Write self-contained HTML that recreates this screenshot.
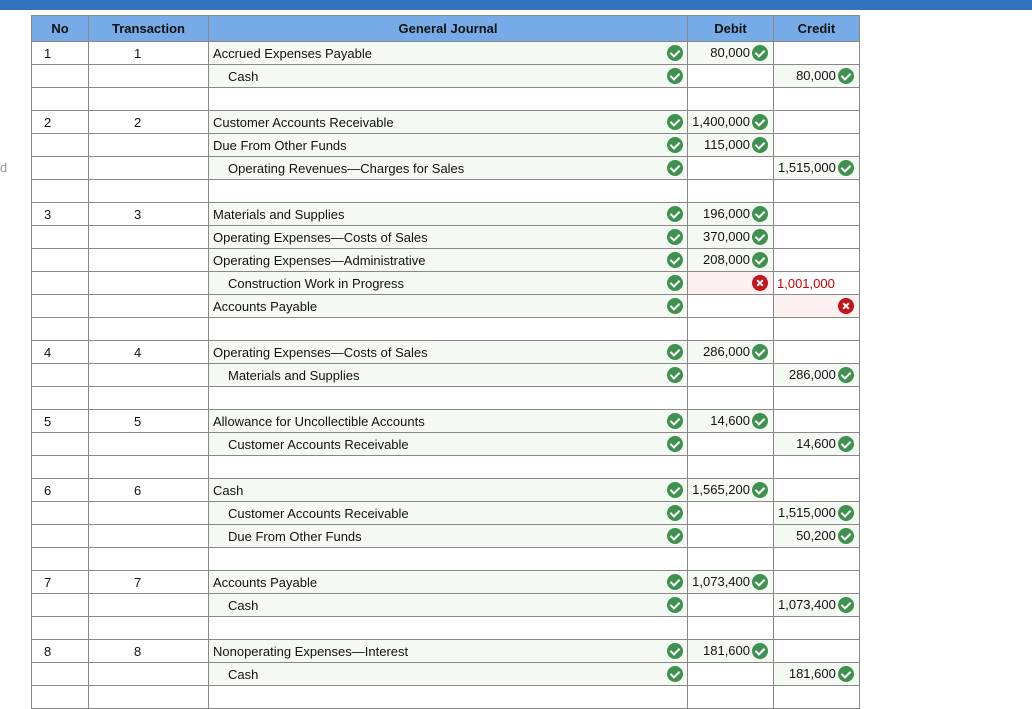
<!DOCTYPE html>
<html><head><meta charset="utf-8"><style>
body{margin:0;background:#fff;font-family:"Liberation Sans",Arial,sans-serif;font-size:13px;color:#111;width:1032px;height:689px;overflow:hidden;position:relative}
.bar{position:absolute;left:0;top:0;width:1032px;height:10px;background:#3173bd}
.d{position:absolute;left:0;top:160px;color:#999;font-size:13px}
table{position:absolute;left:31px;top:15px;border-collapse:collapse;table-layout:fixed}
td,th{border:1px solid #888;height:22px;padding:0 4px;white-space:nowrap;overflow:hidden}
th{background:#76abe8;font-weight:bold;height:25px;font-size:13px}
td.c{text-align:left;padding-left:45px}
td.n{padding-left:12px}
td.j{background:#f4faf3;position:relative}
td.j.i{padding-left:19px}
td.v{text-align:right;background:#f4faf3;padding-right:5px}
td.e{background:#fdf0f1;text-align:right;padding-right:5px}
td.r{color:#c00;text-align:left;padding-left:3px}
.ok,.x{display:inline-block;width:16px;height:16px;border-radius:50%;vertical-align:middle;margin-left:2px;position:relative;top:0}
.ok{background:#3f9150}
.x{background:#c4131b}
.ok::after{content:"";position:absolute;left:5px;top:3px;width:4px;height:7px;border:solid #fff;border-width:0 2px 2px 0;transform:rotate(45deg)}
.x::before,.x::after{content:"";position:absolute;left:7px;top:4px;width:2px;height:8px;background:#fff;transform:rotate(45deg)}
.x::after{transform:rotate(-45deg)}
td.j .ok{position:absolute;right:4px;top:3px}
</style></head><body>
<div class="bar"></div><div class="d">d</div>
<table>
<colgroup><col style="width:57px"><col style="width:120px"><col style="width:479px"><col style="width:86px"><col style="width:85px"></colgroup>
<tr><th>No</th><th>Transaction</th><th>General Journal</th><th>Debit</th><th>Credit</th></tr>
<tr><td class="n">1</td><td class="c">1</td><td class="j">Accrued Expenses Payable<span class="ok"></span></td><td class="v">80,000<span class="ok"></span></td><td></td></tr>
<tr><td></td><td></td><td class="j i">Cash<span class="ok"></span></td><td></td><td class="v">80,000<span class="ok"></span></td></tr>
<tr><td></td><td></td><td></td><td></td><td></td></tr>
<tr><td class="n">2</td><td class="c">2</td><td class="j">Customer Accounts Receivable<span class="ok"></span></td><td class="v">1,400,000<span class="ok"></span></td><td></td></tr>
<tr><td></td><td></td><td class="j">Due From Other Funds<span class="ok"></span></td><td class="v">115,000<span class="ok"></span></td><td></td></tr>
<tr><td></td><td></td><td class="j i">Operating Revenues—Charges for Sales<span class="ok"></span></td><td></td><td class="v">1,515,000<span class="ok"></span></td></tr>
<tr><td></td><td></td><td></td><td></td><td></td></tr>
<tr><td class="n">3</td><td class="c">3</td><td class="j">Materials and Supplies<span class="ok"></span></td><td class="v">196,000<span class="ok"></span></td><td></td></tr>
<tr><td></td><td></td><td class="j">Operating Expenses—Costs of Sales<span class="ok"></span></td><td class="v">370,000<span class="ok"></span></td><td></td></tr>
<tr><td></td><td></td><td class="j">Operating Expenses—Administrative<span class="ok"></span></td><td class="v">208,000<span class="ok"></span></td><td></td></tr>
<tr><td></td><td></td><td class="j i">Construction Work in Progress<span class="ok"></span></td><td class="e"><span class="x"></span></td><td class="r">1,001,000</td></tr>
<tr><td></td><td></td><td class="j">Accounts Payable<span class="ok"></span></td><td></td><td class="e"><span class="x"></span></td></tr>
<tr><td></td><td></td><td></td><td></td><td></td></tr>
<tr><td class="n">4</td><td class="c">4</td><td class="j">Operating Expenses—Costs of Sales<span class="ok"></span></td><td class="v">286,000<span class="ok"></span></td><td></td></tr>
<tr><td></td><td></td><td class="j i">Materials and Supplies<span class="ok"></span></td><td></td><td class="v">286,000<span class="ok"></span></td></tr>
<tr><td></td><td></td><td></td><td></td><td></td></tr>
<tr><td class="n">5</td><td class="c">5</td><td class="j">Allowance for Uncollectible Accounts<span class="ok"></span></td><td class="v">14,600<span class="ok"></span></td><td></td></tr>
<tr><td></td><td></td><td class="j i">Customer Accounts Receivable<span class="ok"></span></td><td></td><td class="v">14,600<span class="ok"></span></td></tr>
<tr><td></td><td></td><td></td><td></td><td></td></tr>
<tr><td class="n">6</td><td class="c">6</td><td class="j">Cash<span class="ok"></span></td><td class="v">1,565,200<span class="ok"></span></td><td></td></tr>
<tr><td></td><td></td><td class="j i">Customer Accounts Receivable<span class="ok"></span></td><td></td><td class="v">1,515,000<span class="ok"></span></td></tr>
<tr><td></td><td></td><td class="j i">Due From Other Funds<span class="ok"></span></td><td></td><td class="v">50,200<span class="ok"></span></td></tr>
<tr><td></td><td></td><td></td><td></td><td></td></tr>
<tr><td class="n">7</td><td class="c">7</td><td class="j">Accounts Payable<span class="ok"></span></td><td class="v">1,073,400<span class="ok"></span></td><td></td></tr>
<tr><td></td><td></td><td class="j i">Cash<span class="ok"></span></td><td></td><td class="v">1,073,400<span class="ok"></span></td></tr>
<tr><td></td><td></td><td></td><td></td><td></td></tr>
<tr><td class="n">8</td><td class="c">8</td><td class="j">Nonoperating Expenses—Interest<span class="ok"></span></td><td class="v">181,600<span class="ok"></span></td><td></td></tr>
<tr><td></td><td></td><td class="j i">Cash<span class="ok"></span></td><td></td><td class="v">181,600<span class="ok"></span></td></tr>
<tr><td></td><td></td><td></td><td></td><td></td></tr>
</table>
</body></html>
